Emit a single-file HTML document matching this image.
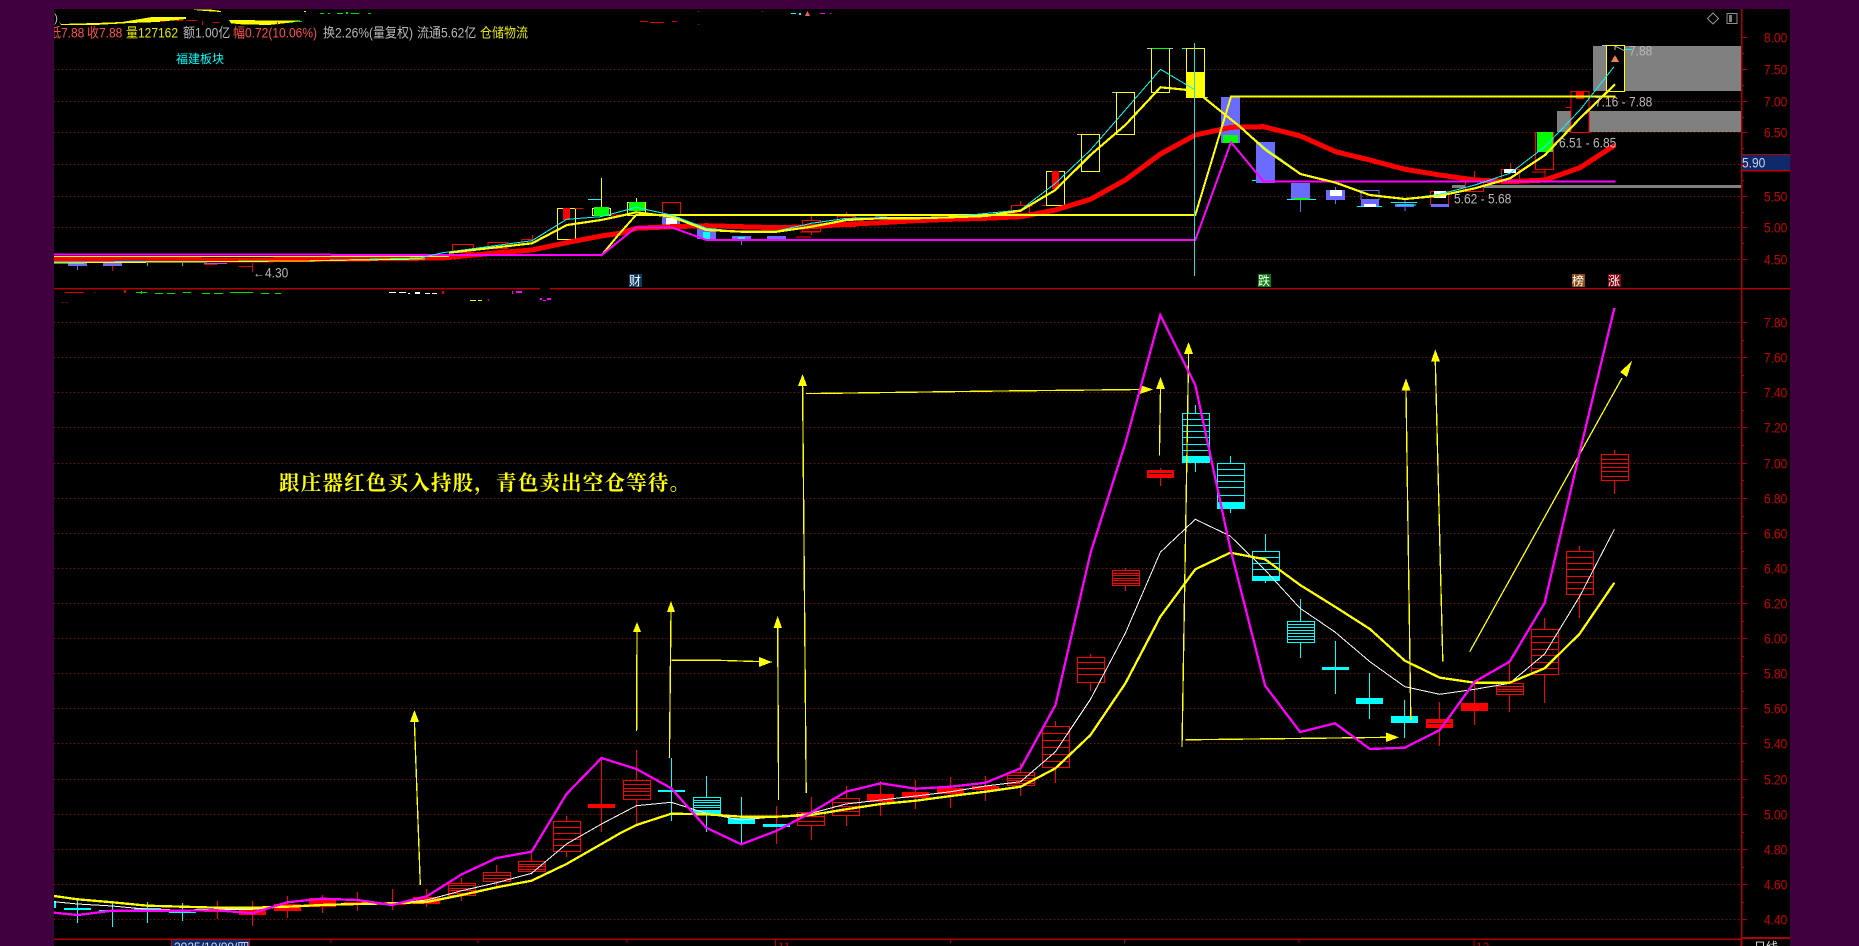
<!DOCTYPE html>
<html lang="zh-CN">
<head>
<meta charset="utf-8">
<title>K线</title>
<style>
html,body{margin:0;padding:0;width:1859px;height:946px;overflow:hidden;background:#400040}
svg{display:block;position:absolute;left:0;top:0}
text{font-family:"Liberation Sans","Noto Sans CJK SC",sans-serif;font-size:12px}
.t{transform-box:fill-box;transform-origin:0 100%;transform:translateY(.7px) scaleY(1.14)}
.ax{fill:#c80000}
.g{fill:#b8b8b8}
.r{fill:#ff5050}
.y{fill:#e8e800}
</style>
</head>
<body>
<svg width="1859" height="946" viewBox="0 0 1859 946" xmlns="http://www.w3.org/2000/svg" shape-rendering="crispEdges">
<defs>
<clipPath id="clipL"><rect x="54" y="9" width="1736" height="937"/></clipPath>
</defs>
<rect x="0" y="0" width="1859" height="946" fill="#400040"/>
<rect x="54" y="9" width="1736" height="937" fill="#000"/>

<!-- grid -->
<g stroke="#b00000" stroke-width="1" stroke-dasharray="1 3" fill="none">
<path d="M54 69.5H1741M54 101.5H1741M54 132.5H1741M54 164.5H1741M54 196.5H1741M54 227.5H1741M54 259.5H1741"/>
<path d="M54 322.5H1741M54 357.5H1741M54 392.5H1741M54 427.5H1741M54 463.5H1741M54 498.5H1741M54 533.5H1741M54 568.5H1741M54 603.5H1741M54 638.5H1741M54 673.5H1741M54 708.5H1741M54 743.5H1741M54 779.5H1741M54 814.5H1741M54 849.5H1741M54 884.5H1741M54 919.5H1741"/>
</g>

<!-- gray zones -->
<g fill="#808080">
<rect x="1593" y="46" width="148" height="45"/>
<rect x="1557" y="111" width="184" height="21"/>
<rect x="1452" y="185" width="289" height="3"/>
</g>

<!-- frames -->
<g stroke="#b00000" fill="none" stroke-width="1.5">
<path d="M54 288.5H540M550 288.5H1790"/>
<path d="M54 939H1741"/>
<path d="M1741.5 9V946"/>
<path d="M1742 938H1790" stroke-width="2"/>
<path d="M1742 154.5H1790"/>
</g>
<rect x="1742" y="155" width="48" height="15" fill="#0f2a6a"/>
<path d="M1742 170.5H1790" stroke="#c00000" stroke-width="1.5"/>
<path stroke="#b00000" stroke-width="1" fill="none" d="M1741 37.5H1747M1741 69.5H1747M1741 101.5H1747M1741 132.5H1747M1741 164.5H1747M1741 196.5H1747M1741 227.5H1747M1741 259.5H1747M1741 53.5H1744M1741 85.5H1744M1741 117.5H1744M1741 148.5H1744M1741 180.5H1744M1741 212.5H1744M1741 243.5H1744
M1741 322.5H1747M1741 357.5H1747M1741 392.5H1747M1741 427.5H1747M1741 463.5H1747M1741 498.5H1747M1741 533.5H1747M1741 568.5H1747M1741 603.5H1747M1741 638.5H1747M1741 673.5H1747M1741 708.5H1747M1741 743.5H1747M1741 779.5H1747M1741 814.5H1747M1741 849.5H1747M1741 884.5H1747M1741 919.5H1747
M1741 340.5H1744M1741 375.5H1744M1741 410.5H1744M1741 445.5H1744M1741 480.5H1744M1741 516.5H1744M1741 551.5H1744M1741 586.5H1744M1741 621.5H1744M1741 656.5H1744M1741 691.5H1744M1741 726.5H1744M1741 761.5H1744M1741 797.5H1744M1741 832.5H1744M1741 867.5H1744M1741 902.5H1744
M331 939V943M478 939V943M627 939V943M775.5 939V946M950.5 939V943M1124.5 939V943M1299 939V943M1474 939V946M1741 939V946"/>

<!-- axis labels -->
<g class="ax">
<text class="t" x="1764" y="42">8.00</text><text class="t" x="1764" y="74">7.50</text><text class="t" x="1764" y="106">7.00</text><text class="t" x="1764" y="137">6.50</text><text class="t" x="1764" y="201">5.50</text><text class="t" x="1764" y="232">5.00</text><text class="t" x="1764" y="264">4.50</text>
<text class="t" x="1764" y="327">7.80</text><text class="t" x="1764" y="362">7.60</text><text class="t" x="1764" y="397">7.40</text><text class="t" x="1764" y="432">7.20</text><text class="t" x="1764" y="468">7.00</text><text class="t" x="1764" y="503">6.80</text><text class="t" x="1764" y="538">6.60</text><text class="t" x="1764" y="573">6.40</text><text class="t" x="1764" y="608">6.20</text><text class="t" x="1764" y="643">6.00</text><text class="t" x="1764" y="678">5.80</text><text class="t" x="1764" y="713">5.60</text><text class="t" x="1764" y="748">5.40</text><text class="t" x="1764" y="784">5.20</text><text class="t" x="1764" y="819">5.00</text><text class="t" x="1764" y="854">4.80</text><text class="t" x="1764" y="889">4.60</text><text class="t" x="1764" y="924">4.40</text>
</g>
<text class="t" x="1742" y="167" fill="#c8d4f0">5.90</text>

<!-- clipped header fragments -->
<g clip-path="url(#clipL)">
<polygon fill="#ffff00" points="59,21 61,24 95,23 122,22 152,17 186,17 186,19 158,22 130,23 95,25 61,25"/>
<polygon fill="#ffff00" points="194,9.5 210,9.5 221,11 221,12 205,11 194,10"/>
<polygon fill="#ffff00" points="229,20 300,20.7 293,22.3 269,25 241,24.3 231,23.3"/>
<g fill="#00e000"><rect x="320" y="13" width="4" height="1"/><rect x="328" y="13" width="2" height="1"/><rect x="337" y="13" width="6" height="1"/><rect x="346" y="12" width="2" height="2"/><rect x="351" y="13" width="8" height="1"/><rect x="368" y="13" width="3" height="1"/><rect x="289" y="22" width="3" height="1"/><rect x="295" y="21" width="7" height="1"/></g>
<g fill="#e00000"><rect x="160" y="21" width="5" height="1"/><rect x="175" y="20" width="8" height="1"/><rect x="187" y="20" width="10" height="1"/><rect x="202" y="21" width="1" height="4"/><rect x="213" y="22" width="6" height="1"/><rect x="277" y="22" width="1" height="3"/><rect x="640" y="21" width="8" height="1"/><rect x="650" y="22" width="14" height="1"/><rect x="672" y="21" width="5" height="1"/><rect x="698" y="11" width="1" height="1"/><rect x="762" y="11" width="1" height="1"/><rect x="698" y="24" width="1" height="1"/></g>
<rect x="304" y="11" width="2" height="1" fill="#ff0"/>
<g fill="#0ff"><rect x="791" y="13" width="5" height="1"/><rect x="799" y="13" width="2" height="2"/></g>
<polygon points="807.5,11 805,16 810,16" fill="#f06060"/>
<g fill="#f0f"><rect x="820" y="13" width="5" height="1"/><rect x="830" y="13" width="1" height="1"/></g>

<!-- header text -->
<text class="t" x="49" y="37" fill="#ff5050">低</text>
<text class="t r" x="61" y="37">7.88</text>
<text class="t r" x="87" y="37">收7.88</text>
<text class="t y" x="126" y="37">量127162</text>
<text class="t g" x="183" y="37">额1.00亿</text>
<text class="t r" x="233" y="37">幅0.72(10.06%)</text>
<text class="t g" x="323" y="37" textLength="90">换2.26%(量复权)</text>
<text class="t g" x="417" y="37">流通5.62亿</text>
<text class="t y" x="480" y="37">仓储物流</text>
<text class="g" x="54" y="22">)</text>
<text x="176" y="63" fill="#00ffff">福建板块</text>
</g>

<!-- icons top right -->
<polygon points="1713,13 1718.5,18.5 1713,24 1707.5,18.5" fill="none" stroke="#909090" stroke-width="1"/>
<rect x="1727" y="13.5" width="10" height="10" fill="none" stroke="#909090" stroke-width="1"/>
<rect x="1729" y="15" width="3" height="7" fill="#808080"/>

<!-- ===== TOP CHART ===== -->
<g fill="#6b6bff"><rect x="68" y="263" width="19" height="3"/><rect x="103" y="263" width="19" height="3"/><rect x="204" y="263" width="23" height="1"/></g>
<path d="M77.5 266V270" stroke="#6b6bff" fill="none"/>
<path d="M112.5 266V271M239 266.5H253M252.5 263V272M204 264.5H217" stroke="#e00000" fill="none"/>
<path d="M147.5 263V266M182.5 263V266" stroke="#30c0c0" fill="none"/>

<g fill="#000" stroke="#f00" stroke-width="1">
<rect x="452.5" y="244.5" width="21" height="8"/>
<rect x="488" y="242.5" width="20" height="6"/>
<rect x="522" y="239.5" width="10" height="4"/>
<rect x="662.5" y="202.5" width="18" height="13"/>
<rect x="802.5" y="220.5" width="18" height="11"/>
<rect x="837.5" y="216.5" width="18" height="10"/>
<rect x="1011.5" y="205.5" width="18" height="8"/>
<rect x="1430.5" y="191.5" width="18" height="13"/>
<rect x="1465.5" y="180.5" width="18" height="11"/>
<rect x="1501.5" y="169.5" width="18" height="11"/>
<rect x="1535.5" y="132.5" width="18" height="37"/>
<rect x="1571" y="91.5" width="18" height="41"/>
</g>
<path stroke="#f00" fill="none" d="M532.5 235V240M811.5 216V220M811.5 232V235M846.5 212V217M1474.5 171V180M1510.5 163V169M1545 169V183M1532 172H1545M1566 107.5H1571M1020.5 201V206M1027 206H1033M796 237H811M800 232H820"/>

<g fill="#000" stroke="#ff0" stroke-width="1">
<rect x="557.5" y="208.5" width="18" height="31"/>
<rect x="592.5" y="208.5" width="18" height="7"/>
<rect x="627.5" y="202.5" width="18" height="13"/>
<rect x="1046.5" y="171.5" width="18" height="34"/>
<rect x="1081.5" y="134.5" width="18" height="37"/>
<rect x="1116.5" y="92.5" width="18" height="42"/>
<rect x="1151.5" y="48.5" width="18" height="44"/>
<rect x="1186.5" y="48.5" width="18" height="49"/>
<rect x="1606.5" y="45.5" width="18" height="46"/>
</g>
<path stroke="#ff0" fill="none" d="M601.5 178V207M636.5 198V203"/>
<rect x="563" y="208" width="7" height="12" fill="#f00"/>
<rect x="1052" y="171" width="7" height="18" fill="#f00"/>
<rect x="1187" y="72" width="18" height="26" fill="#ff0"/>
<rect x="594" y="207" width="15" height="9" fill="#0f0"/>
<rect x="629" y="202" width="16" height="9" fill="#0f0"/>
<rect x="1537" y="132" width="16" height="20" fill="#0f0"/>
<rect x="1576" y="91" width="8" height="8" fill="#f00"/>
<path stroke="#0ff" fill="none" d="M588 199.5H601M1182 48.5H1186M1625 49.5H1632"/>
<path stroke="#f00" fill="none" d="M575 208.5H583M611 215H622M1042 205.5H1046"/>
<path stroke="#c0c0c0" fill="none" d="M1077 134.5H1081M1112 92.5H1116M1147 48.5H1173M1602 45.5H1606M1205 97.5H1208"/>
<path stroke="#0f0" fill="none" d="M1152 48.5H1169"/>

<g fill="#6b6bff">
<rect x="662" y="217" width="18" height="8"/>
<rect x="697" y="227" width="19" height="12"/>
<rect x="732" y="236" width="19" height="3"/>
<rect x="767" y="236" width="19" height="3"/>
<rect x="1221" y="97" width="19" height="46"/>
<rect x="1256" y="142" width="19" height="41"/>
<rect x="1291" y="183" width="19" height="17"/>
<rect x="1326" y="190" width="19" height="10"/>
<rect x="1361" y="199" width="18" height="8"/>
<rect x="1395" y="204" width="19" height="3"/>
<rect x="1431" y="204" width="18" height="3"/>
</g>
<rect x="875" y="216" width="12" height="2" fill="#0060ff"/>
<rect x="1361" y="190.5" width="18" height="9" fill="none" stroke="#6b6bff"/>
<path stroke="#6b6bff" fill="none" d="M1300.5 200V212M1335.5 187V204M1405 200V211M741.5 240V245"/>
<path stroke="#0ff" fill="none" d="M1252 180.5H1256M1287 199.5H1316M1357 206.5H1382M1391 202.5H1417M1397 205H1416"/>
<g fill="#fff">
<rect x="666" y="218" width="11" height="7"/>
<rect x="1330" y="190" width="12" height="6"/>
<rect x="1364" y="204" width="12" height="3"/>
<rect x="1434" y="191" width="12" height="7"/>
<rect x="1504" y="169" width="12" height="4"/>
</g>
<rect x="703" y="232" width="7" height="7" fill="#0ff"/>
<rect x="738" y="237" width="7" height="3" fill="#0ff"/>
<rect x="1223" y="135" width="15" height="8" fill="#0f0"/>
<rect x="1294" y="198" width="15" height="2" fill="#0f0"/>

<!-- top lines -->
<polyline fill="none" stroke="#f00" stroke-width="5" points="54,259 250,260 443,258 498,252.7 532,250 566.6,242.7 601,236 620,233.3 636,228.3 671.4,226.7 706.6,225.7 741.4,226.7 776.6,227.7 811.4,226.7 846.6,224.3 880.6,222.7 915.4,220.7 950.6,219.3 985.4,218.3 1020.6,216.7 1055.4,210 1090.5,199.3 1125.3,180 1160.5,154 1195.3,135 1231,127.3 1263.7,126.7 1300.5,136 1335.7,151.7 1369.7,160 1405,169.3 1439.7,175 1475,180 1510,181.7 1545,180 1580,167.7 1615,145"/>
<polyline fill="none" stroke="#ff0" stroke-width="2" points="601,256 620,233 636,215 1195.3,215 1231,96.7 1615.6,96.7"/>
<polyline fill="none" stroke="#ff0" stroke-width="1" points="54,256.5 449,256.5"/>
<polyline fill="none" stroke="#f0f" stroke-width="2" points="54,254.5 601.8,255 636,227.3 671.4,227.3 706.6,240 1195.3,240 1231,142.3 1240,153 1263.7,181.7 1615.6,181.7"/>
<polyline fill="none" stroke="#0ff" stroke-width="1" points="54,262 300,261 420,258 443,252.7 532,240.7 566.6,219.3 601,216.7 620,211.7 636,207.3 671.4,215 706.6,228.3 741.4,231.7 776.6,231 811.4,223.3 846.6,218.3 880.6,218 950,217 1020.6,210 1055.4,183.3 1090.5,150 1125.3,110 1160.5,69.3 1195.3,90 1240,126.7 1265.7,148.3 1300.5,173.3 1335.7,183.3 1369.7,194.3 1405,199 1439.7,194.3 1475,185 1510,173.3 1545,146.7 1580,110 1614,66.7"/>
<polyline fill="none" stroke="#ff0" stroke-width="1" points="54,263 300,261 425,259"/>
<polyline fill="none" stroke="#ff0" stroke-width="2.2" points="449,252.7 532,243.3 567,225 601,220 620,216 636,212.3 671.4,216.7 706.6,230 741.4,231.7 776.6,231.7 811.4,226.7 846.6,220 880.6,218.3 915.4,218.3 950.6,217.3 985.4,216 1020.6,210.7 1055.4,190 1090.5,155 1125.3,125 1160.5,87.3 1195.3,90.7 1240,126.7 1265.7,150 1300.5,174 1335.7,182.7 1369.7,195 1405,199 1439.7,195.7 1475,188.3 1510,178.3 1545,155 1580,118.3 1615,84.3"/>
<path d="M1194.5 43V276" stroke="#20e0e0" fill="none"/>
<polygon points="1615,55 1611,62 1619,62" fill="#f08050"/>
<path d="M1615 46L1625 51M1615 46V50" stroke="#c0c0c0" fill="none"/>

<text class="t g" x="253" y="277">←4.30</text>
<text class="t g" x="1629" y="55">7.88</text>
<text class="t g" x="1595" y="106">7.16 - 7.88</text>
<text class="t g" x="1559" y="147">6.51 - 6.85</text>
<text class="t g" x="1454" y="203">5.62 - 5.68</text>

<rect x="629" y="274" width="13" height="13" fill="#0a3a60"/><text x="629" y="285" fill="#fff">财</text>
<rect x="1258" y="274" width="13" height="13" fill="#0a7a10"/><text x="1258" y="285" fill="#fff">跌</text>
<rect x="1572" y="274" width="13" height="13" fill="#8a4a10"/><text x="1572" y="285" fill="#fff">榜</text>
<rect x="1608" y="274" width="13" height="13" fill="#800010"/><text x="1608" y="285" fill="#fff">涨</text>

<!-- fragments below separator -->
<g fill="#e00000"><rect x="65" y="292" width="19" height="1"/><rect x="94" y="292" width="1" height="1"/><rect x="124" y="290" width="2" height="3"/><rect x="62" y="302" width="1" height="1"/><rect x="66" y="302" width="1" height="1"/><rect x="442" y="291" width="2" height="3"/><rect x="488" y="299" width="1" height="2"/></g>
<g fill="#00e000"><rect x="136" y="292" width="11" height="1"/><rect x="141" y="291" width="1" height="3"/><rect x="155" y="293" width="8" height="1"/><rect x="167" y="293" width="8" height="1"/><rect x="183" y="292" width="8" height="1"/><rect x="202" y="293" width="8" height="1"/><rect x="214" y="293" width="9" height="1"/><rect x="230" y="292" width="23" height="1"/><rect x="261" y="293" width="8" height="1"/><rect x="275" y="293" width="6" height="1"/></g>
<g fill="#fff"><rect x="389" y="292" width="7" height="1"/><rect x="399" y="292" width="7" height="1"/><rect x="408" y="293" width="2" height="1"/><rect x="415" y="292" width="5" height="2"/><rect x="425" y="293" width="5" height="1"/><rect x="432" y="293" width="5" height="1"/></g>
<g fill="#ff0"><rect x="470" y="300" width="6" height="1"/><rect x="478" y="300" width="4" height="1"/></g>
<g fill="#f0f"><rect x="512" y="291" width="1" height="3"/><rect x="516" y="291" width="6" height="2"/><rect x="540" y="298" width="2" height="2"/><rect x="543" y="300" width="3" height="1"/><rect x="547" y="298" width="4" height="2"/></g>

<!-- ===== MAIN CHART ===== -->
<text x="279" y="490" fill="#ffff00" style="font-family:'Liberation Serif','Noto Serif CJK SC',serif;font-size:20.5px;font-weight:700;letter-spacing:1.2px">跟庄器红色买入持股&#xFF0C;青色卖出空仓等待。</text>

<rect x="54" y="901" width="2" height="7" fill="#0ff"/>

<!-- wicks red -->
<path stroke="#f00" fill="none" d="M217.5 901V919M252.5 901V926M287.5 896V918M322.5 895V913M357.5 892V911M392.5 889V910M426.5 889V907M461.5 878V901M496.5 865V886M531.5 852V875M566.5 816V857M601.5 758V832M636.5 750V824M776.5 806V844M811.5 797V840M846.5 786V826M880.5 781V816M915.5 780V809M950.5 777V808M985.5 776V801M1020.5 763V796M1055.5 721V783M1090.5 654V691M1125.5 568V591M1160.5 468V486M1439.5 702V746M1474.5 683V725M1509.5 660V712M1544.5 618V703M1579.5 546V618M1614.5 450V494"/>
<!-- wicks cyan -->
<path stroke="#0ff" fill="none" d="M77.5 900V923M112.5 903V927M147.5 902V923M182.5 903V921M671.5 758V821M706.5 776V832M741.5 797V844M1195.5 405V472M1230.5 456V513M1265.5 534V583M1300.5 599V658M1335.5 641V694M1369.5 673V719M1404.5 700V738"/>

<!-- red filled bodies -->
<g fill="#f00">
<rect x="204" y="909" width="27" height="3"/>
<rect x="239" y="909" width="27" height="6"/>
<rect x="274" y="904" width="27" height="7"/>
<rect x="309" y="898" width="27" height="9"/>
<rect x="344" y="902" width="27" height="3"/>
<rect x="379" y="903" width="27" height="2"/>
<rect x="413" y="897" width="27" height="7"/>
<rect x="588" y="804" width="27" height="4"/>
<rect x="867" y="794" width="27" height="8"/>
<rect x="902" y="792" width="27" height="6"/>
<rect x="937" y="788" width="27" height="6"/>
<rect x="972" y="786" width="27" height="4"/>
<rect x="1147" y="470" width="27" height="8"/>
<rect x="1426" y="719" width="27" height="9"/>
<rect x="1461" y="703" width="27" height="8"/>
</g>
<path stroke="#000" fill="none" d="M1428 723.5H1451M1149 473.5H1172"/>

<!-- hatched red -->
<g fill="#000" stroke="#f00" stroke-width="1">
<rect x="448.5" y="883.5" width="27" height="12"/>
<rect x="483.5" y="872.5" width="27" height="9"/>
<rect x="518.5" y="861.5" width="27" height="10"/>
<rect x="553.5" y="821.5" width="27" height="30"/>
<rect x="623.5" y="780.5" width="27" height="19"/>
<rect x="797.5" y="812.5" width="27" height="13"/>
<rect x="832.5" y="798.5" width="27" height="17"/>
<rect x="1007.5" y="772.5" width="27" height="13"/>
<rect x="1042.5" y="726.5" width="27" height="41"/>
<rect x="1077.5" y="657.5" width="27" height="25"/>
<rect x="1112.5" y="570.5" width="27" height="15"/>
<rect x="1496.5" y="683.5" width="27" height="11"/>
<rect x="1531.5" y="629.5" width="27" height="45"/>
<rect x="1566.5" y="551.5" width="27" height="43"/>
<rect x="1601.5" y="454.5" width="27" height="26"/>
</g>
<path fill="none" stroke="#f00" d="M448 885.5h28M448 888.5h28M448 890.5h28M448 893.5h28
M483 875.5h28M483 878.5h28
M518 864.5h28M518 866.5h28M518 869.5h28
M553 827.5h28M553 833.5h28M553 839.5h28M553 845.5h28
M623 784.5h28M623 788.5h28M623 791.5h28M623 795.5h28
M797 816.5h28M797 821.5h28
M832 802.5h28M832 806.5h28M832 811.5h28
M1007 775.5h28M1007 778.5h28M1007 780.5h28M1007 783.5h28
M1042 733.5h28M1042 740.5h28M1042 747.5h28M1042 754.5h28M1042 761.5h28
M1077 662.5h28M1077 668.5h28M1077 674.5h28
M1112 573.5h28M1112 575.5h28M1112 578.5h28M1112 580.5h28M1112 583.5h28
M1496 686.5h28M1496 689.5h28M1496 691.5h28
M1531 636.5h28M1531 642.5h28M1531 649.5h28M1531 655.5h28M1531 662.5h28M1531 668.5h28
M1566 557.5h28M1566 563.5h28M1566 569.5h28M1566 576.5h28M1566 582.5h28M1566 588.5h28
M1601 459.5h28M1601 463.5h28M1601 467.5h28M1601 471.5h28M1601 476.5h28"/>

<!-- cyan bodies -->
<g fill="#0ff">
<rect x="64" y="908" width="27" height="2"/>
<rect x="99" y="910" width="27" height="1"/>
<rect x="134" y="908" width="27" height="2"/>
<rect x="169" y="912" width="27" height="1"/>
<rect x="658" y="790" width="27" height="2"/>
<rect x="728" y="818" width="27" height="6"/>
<rect x="763" y="824" width="27" height="3"/>
<rect x="1322" y="667" width="27" height="3"/>
<rect x="1356" y="698" width="27" height="6"/>
<rect x="1391" y="716" width="27" height="7"/>
</g>
<g fill="#000" stroke="#0ff" stroke-width="1">
<rect x="693.5" y="797.5" width="27" height="17"/>
<rect x="1182.5" y="413.5" width="27" height="49"/>
<rect x="1217.5" y="463.5" width="27" height="45"/>
<rect x="1252.5" y="551.5" width="27" height="29"/>
<rect x="1287.5" y="621.5" width="27" height="21"/>
</g>
<path fill="none" stroke="#0ff" d="M693 800.5h28M693 802.5h28M693 805.5h28M693 807.5h28M693 810.5h28
M1182 419.5h28M1182 425.5h28M1182 431.5h28M1182 437.5h28M1182 444.5h28M1182 450.5h28
M1217 469.5h28M1217 475.5h28M1217 481.5h28M1217 487.5h28M1217 495.5h28
M1252 557.5h28M1252 563.5h28M1252 569.5h28
M1287 624.5h28M1287 627.5h28M1287 630.5h28M1287 633.5h28M1287 636.5h28M1287 639.5h28"/>
<g fill="#0ff">
<rect x="693" y="811" width="27" height="4"/>
<rect x="1182" y="456" width="27" height="7"/>
<rect x="1217" y="502" width="27" height="7"/>
<rect x="1252" y="576" width="27" height="5"/>
</g>

<!-- arrows thin yellow -->
<g fill="none" stroke="#ff0" stroke-width="1.3">
<path d="M420.3 885L414.4 722"/>
<path d="M636.6 731L637 632"/>
<path d="M669.4 758L671 612"/>
<path d="M671.4 660.3H718L772 662"/>
<path d="M778.6 800L777.7 628"/>
<path d="M806.2 793L802.6 386"/>
<path d="M806 393.6L1000 391L1140 389.5"/>
<path d="M1159.4 455.7L1160.5 389"/>
<path d="M1182 747L1188.6 354"/>
<path d="M1185.5 739.8L1335 738L1388 737.3"/>
<path d="M1410.8 720L1406 390"/>
<path d="M1442.8 661.7L1435.3 361"/>
<path d="M1469.7 651.7L1622 378"/>
</g>
<g fill="#ff0">
<polygon points="414.4,710 410,722 419,722"/>
<polygon points="637,622 633,632 641,632"/>
<polygon points="671,601 667,612 675,612"/>
<polygon points="772,662 759,657 759,667"/>
<polygon points="777.7,616 773.5,628 782,628"/>
<polygon points="802.6,374 798,386 807,386"/>
<polygon points="1153,389.5 1140,385 1140,394"/>
<polygon points="1160.5,377 1156,389 1165,389"/>
<polygon points="1188.6,342 1184,354 1193,354"/>
<polygon points="1399,737.3 1386,732.5 1386,742"/>
<polygon points="1406,378.5 1401.5,390.5 1410.5,390.5"/>
<polygon points="1435.3,349.5 1431,361.5 1440,361.5"/>
<polygon points="1632,361 1620,372 1627,377"/>
</g>

<!-- main lines -->
<polyline fill="none" stroke="#fff" stroke-width="1" points="54,901.7 77.5,904 112.4,906 147.4,909.3 182.3,910 217.2,909.3 252.2,909.3 287.1,906.7 322,904.3 356.9,903.3 391.9,904 426.8,900 461.7,890.7 496.7,882.7 531.6,873.3 566.5,844 601.5,824 636.4,805.7 671.3,802.3 706.2,813.3 741.2,820 776.1,816.7 811,813.3 846,804 880.9,800 915.8,796 950.8,791.7 985.7,786 1020.6,781.7 1055.5,751.7 1090.5,699.3 1125.4,633 1160.3,552.3 1195.3,519.3 1230.2,536 1265.1,570 1300.1,608.3 1335,632 1369.9,661.7 1404.8,686.7 1439.8,694.3 1474.7,689.3 1509.6,683.3 1544.6,654 1579.5,596.7 1614.4,529.3"/>
<polyline fill="none" stroke="#ff0" stroke-width="2.3" points="54,896 77.5,899.3 112.4,902.3 147.4,905.7 182.3,906.7 217.2,907.7 252.2,907.7 287.1,906.7 322,905 356.9,904 391.9,903.3 426.8,902 461.7,895 496.7,887.3 531.6,880.7 566.5,864 601.5,844 620,833.3 636.4,825 671.3,813.7 706.2,814.3 741.2,816.7 776.1,816.7 811,815 846,809.3 880.9,804 915.8,800.7 950.8,796 985.7,791.7 1020.6,786.7 1055.5,768.3 1090.5,735 1125.4,683.3 1160.3,616.7 1195.3,569.3 1230.2,552.7 1265.1,559.3 1300.1,585 1335,606.7 1369.9,629 1404.8,660.7 1439.8,677.7 1474.7,682.7 1509.6,682.7 1544.6,668.3 1579.5,634 1614.4,582.7"/>
<polyline fill="none" stroke="#f0f" stroke-width="2.3" points="54,912.7 77.5,915 112.4,910.7 147.4,910.7 182.3,910.7 217.2,910.3 252.2,913.3 287.1,902.3 322,898.7 356.9,900 391.9,905 426.8,896.3 461.7,874.3 496.7,858 531.6,851.7 566.5,794 601.5,758 636.4,769 671.3,788.3 706.2,827.7 741.2,844.3 776.1,831 811,812.7 846,791.7 880.9,783.3 915.8,788.7 950.8,786.7 985.7,782.7 1020.6,768.3 1055.5,705 1090.5,553 1125.4,443 1160.3,315 1195.3,385 1230.2,548 1265.1,685.7 1300.1,732 1335,723.3 1369.9,749 1404.8,747.7 1439.8,730 1474.7,681.7 1509.6,661.7 1544.6,603 1579.5,453 1614.4,308"/>

<!-- bottom clipped labels -->
<rect x="171.5" y="939.5" width="78" height="8" fill="#0f2a6a" stroke="#c00000" stroke-width="1"/>
<text x="174" y="951" fill="#d0d8f0">2025/10/09/四</text>
<text x="778" y="951" fill="#c00000">11</text>
<text x="1476" y="951" fill="#c00000">12</text>
<text x="1754" y="951" fill="#e0e0e0">日线</text>
</svg>
</body>
</html>
